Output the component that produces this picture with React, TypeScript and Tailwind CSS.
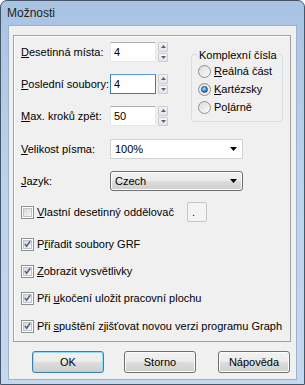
const font = "font-['Liberation_Sans',Arial,sans-serif]";

function SpinArrow({ up }: { up?: boolean }) {
  return (
    <svg width="5" height="3" viewBox="0 0 5 3">
      <path d={up ? "M0 3 L2.5 0 L5 3 Z" : "M0 0 L5 0 L2.5 3 Z"} fill="#4d6185" />
    </svg>
  );
}

function SpinInput({ value, focused }: { value: string; focused?: boolean }) {
  return (
    <div className="flex items-center">
      <div
        className={`w-[46px] h-[20px] bg-white border pl-[3px] flex items-center text-[11px] ${
          focused
            ? "border-[#3d7bad] border-t-[#569de5]"
            : "border-[#e3e9ef] border-t-[#abadb3]"
        }`}
      >
        {value}
      </div>
      <div className="ml-[2px] w-[10px] h-[20px] flex flex-col gap-[1px]">
        <div className="flex-1 rounded-[1px] border border-[#c9ccd2] bg-gradient-to-b from-[#f6f6f6] to-[#e2e4e8] flex items-center justify-center">
          <SpinArrow up />
        </div>
        <div className="flex-1 rounded-[1px] border border-[#c9ccd2] bg-gradient-to-b from-[#f6f6f6] to-[#e2e4e8] flex items-center justify-center">
          <SpinArrow />
        </div>
      </div>
    </div>
  );
}

function DropArrow() {
  return (
    <svg width="7" height="4" viewBox="0 0 7 4">
      <path d="M0 0 L7 0 L3.5 4 Z" fill="#000" />
    </svg>
  );
}

function Radio({ checked }: { checked?: boolean }) {
  return (
    <div className="w-[13px] h-[13px] rounded-full border border-[#8e8f8f] bg-gradient-to-br from-[#dcdcdc] to-[#fbfbfb] flex items-center justify-center shrink-0">
      {checked && (
        <div className="w-[7px] h-[7px] rounded-full border border-[#1c5180] bg-[radial-gradient(circle_at_40%_35%,#c2e4fc,#3a86d0_55%,#1a4f8a)]" />
      )}
    </div>
  );
}

function Check({ checked }: { checked?: boolean }) {
  return (
    <div className="w-[13px] h-[13px] border border-[#8e8f8f] bg-white p-[1px] shrink-0">
      <div className="w-full h-full border border-[#c3c3c3] bg-gradient-to-br from-[#d9d9d9] to-[#f7f7f7] flex items-center justify-center">
        {checked && (
          <svg width="8" height="8" viewBox="0 0 8 8">
            <path d="M1 4 L3 6.5 L7 0.8" stroke="#4a5f97" strokeWidth="1.7" fill="none" />
          </svg>
        )}
      </div>
    </div>
  );
}

function CheckRow({ checked, children, className = "" }: { checked?: boolean; children: React.ReactNode; className?: string }) {
  return (
    <div className={`h-[20px] flex items-center ${className}`}>
      <Check checked={checked} />
      <span className="ml-[3px]">{children}</span>
    </div>
  );
}

function Button({ children, primary, className = "" }: { children: React.ReactNode; primary?: boolean; className?: string }) {
  return (
    <div
      className={`w-[72px] h-[22px] rounded-[3px] border flex items-center justify-center text-[11px] bg-[linear-gradient(#f2f2f2_0%,#ebebeb_50%,#dddddd_51%,#cfcfcf_100%)] ${
        primary
          ? "border-[#3c7fb1] shadow-[inset_0_0_0_1px_#8fdcf8]"
          : "border-[#707070] shadow-[inset_0_0_0_1px_#fcfcfc]"
      } ${className}`}
    >
      {children}
    </div>
  );
}

export default function App() {
  return (
    <div className={`w-[305px] h-[385px] ${font} text-black`}>
      <div className="w-[305px] h-[385px] rounded-t-[7px] border border-[#46566a] bg-gradient-to-b from-[#a8c3e2] via-[#bdd3ec] to-[#c4d8ee] flex flex-col">
        {/* title */}
        <div className="h-[24px] pl-[6px] flex items-center text-[12px] text-[#1e1e1e]">
          Možnosti
        </div>

        {/* client area */}
        <div className="ml-[7px] w-[289px] h-[355px] bg-[#f0f0f0] border border-[#9fb2c9] flex flex-col">
          {/* group */}
          <div className="ml-[4px] mt-[9px] w-[278px] h-[307px] border border-[#a0a0a0] shadow-[inset_1px_1px_0_#ffffff] pl-[7px] pt-[6px] text-[11px] flex flex-col">
            <div className="flex">
              <div className="flex flex-col gap-[12px]">
                <div className="h-[20px] flex items-center">
                  <span className="w-[89px]">
                    <u>D</u>esetinná místa:
                  </span>
                  <SpinInput value="4" />
                </div>
                <div className="h-[20px] flex items-center">
                  <span className="w-[89px]">
                    <u>P</u>oslední soubory:
                  </span>
                  <SpinInput value="4" focused />
                </div>
                <div className="h-[20px] flex items-center">
                  <span className="w-[89px]">
                    <u>M</u>ax. kroků zpět:
                  </span>
                  <SpinInput value="50" />
                </div>
              </div>

              {/* complex numbers */}
              <div className="relative ml-[23px] mt-[12px] w-[92px] h-[68px] rounded-[3px] border border-[#d5dfe5] pl-[6px] pt-[7px]">
                <span className="absolute -top-[8px] left-[5px] px-[2px] bg-[#f0f0f0]">
                  Komplexní čísla
                </span>
                <div className="h-[18px] flex items-center">
                  <Radio />
                  <span className="ml-[3px]">
                    <u>R</u>eálná část
                  </span>
                </div>
                <div className="h-[18px] flex items-center">
                  <Radio checked />
                  <span className="ml-[3px]">
                    <u>K</u>artézsky
                  </span>
                </div>
                <div className="h-[18px] flex items-center">
                  <Radio />
                  <span className="ml-[3px]">
                    Po<u>l</u>árně
                  </span>
                </div>
              </div>
            </div>

            <div className="mt-[13px] h-[20px] flex items-center">
              <span className="w-[89px]">
                <u>V</u>elikost písma:
              </span>
              <div className="w-[133px] h-[20px] bg-white border border-[#d2d2d2] pl-[4px] pr-[5px] flex items-center justify-between">
                <span>100%</span>
                <DropArrow />
              </div>
            </div>

            <div className="mt-[12px] h-[20px] flex items-center">
              <span className="w-[89px]">
                <u>J</u>azyk:
              </span>
              <div className="w-[133px] h-[20px] rounded-[3px] border border-[#707070] shadow-[inset_0_0_0_1px_#fcfcfc] bg-[linear-gradient(#f2f2f2_0%,#ebebeb_50%,#dddddd_51%,#cfcfcf_100%)] pl-[4px] pr-[5px] flex items-center justify-between">
                <span>Czech</span>
                <DropArrow />
              </div>
            </div>

            <div className="mt-[11px] h-[20px] flex items-center">
              <Check />
              <span className="ml-[3px] w-[150px]">
                <u>V</u>lastní desetinný oddělovač
              </span>
              <div className="w-[20px] h-[20px] rounded-[2px] border border-[#c6c6c6] bg-[#f4f4f4] pl-[4px] flex items-center">
                .
              </div>
            </div>

            <CheckRow checked className="mt-[12px]">
              P<u>ř</u>iřadit soubory GRF
            </CheckRow>
            <CheckRow checked className="mt-[7px]">
              <u>Z</u>obrazit vysvětlivky
            </CheckRow>
            <CheckRow checked className="mt-[7px]">
              Při <u>u</u>kočení uložit pracovní plochu
            </CheckRow>
            <CheckRow checked className="mt-[8px]">
              Při <u>s</u>puštění zjišťovat novou verzi programu Graph
            </CheckRow>
          </div>

          {/* buttons */}
          <div className="mt-[9px] flex">
            <Button primary className="ml-[23px]">OK</Button>
            <Button className="ml-[20px]">Storno</Button>
            <Button className="ml-[22px]">Nápověda</Button>
          </div>
        </div>
      </div>
    </div>
  );
}
